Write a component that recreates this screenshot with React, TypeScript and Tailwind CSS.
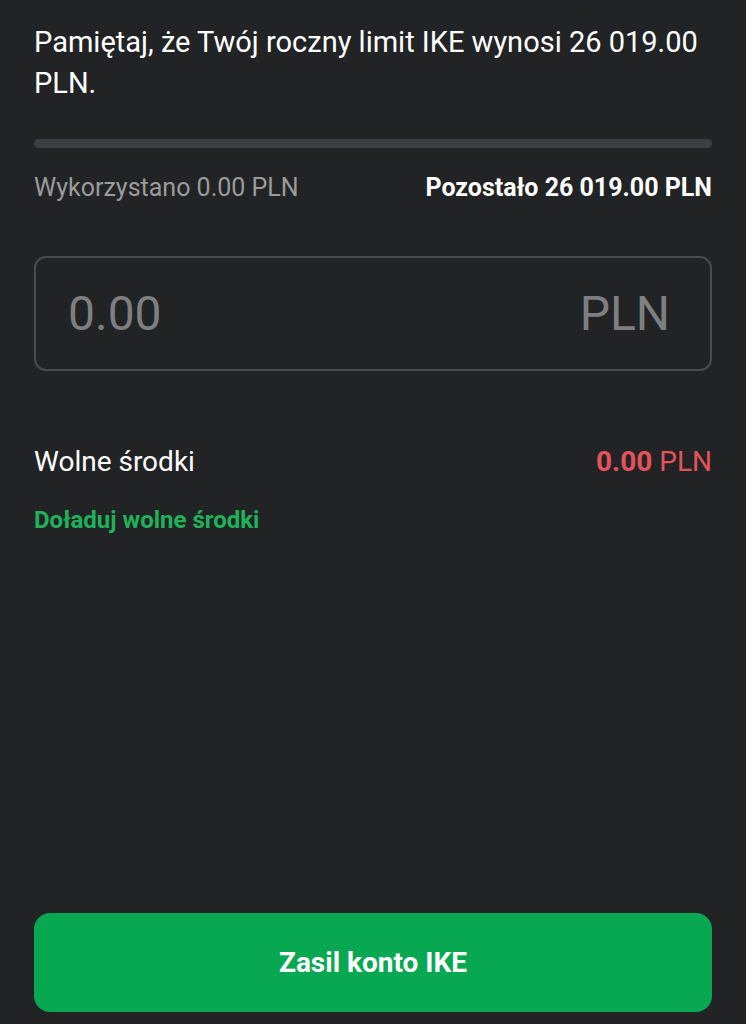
import React from "react";

export default function App() {
  return (
    <div
      className="w-[746px] h-[1024px] bg-[#222325] flex flex-col px-[34px]"
      style={{ fontFamily: "Roboto, 'Noto Sans', sans-serif" }}
    >
      <p className="mt-[22px] text-[29px] leading-[41px] text-white">
        Pamiętaj, że Twój roczny limit IKE wynosi 26 019.00 PLN.
      </p>
      <div className="mt-[35px] h-[9px] rounded-full bg-[#3d3e41]" />
      <div className="mt-[27px] flex justify-between items-center text-[25px] leading-[26px]">
        <span className="text-[#9b9b9c]">Wykorzystano 0.00 PLN</span>
        <span className="text-white font-bold">Pozostało 26 019.00 PLN</span>
      </div>
      <div className="mt-[55px] h-[115px] rounded-[12px] border-2 border-[#4a4b4e] flex items-center justify-between pl-[32px] pr-[40px]">
        <span className="text-[48px] text-[#7e7f80]">0.00</span>
        <span className="text-[48px] text-[#7e7f80]">PLN</span>
      </div>
      <div className="mt-[75px] flex justify-between items-center text-[28px] leading-[32px]">
        <span className="text-white">Wolne środki</span>
        <span className="text-[#e5525c]">
          <span className="font-bold">0.00</span> PLN
        </span>
      </div>
      <div className="mt-[28px] text-[24px] leading-[28px] font-bold text-[#1fb25a]">
        Doładuj wolne środki
      </div>
      <div className="flex-1" />
      <button className="mb-[12px] h-[99px] rounded-[16px] bg-[#08a852] text-white font-bold text-[28px]">
        Zasil konto IKE
      </button>
    </div>
  );
}
